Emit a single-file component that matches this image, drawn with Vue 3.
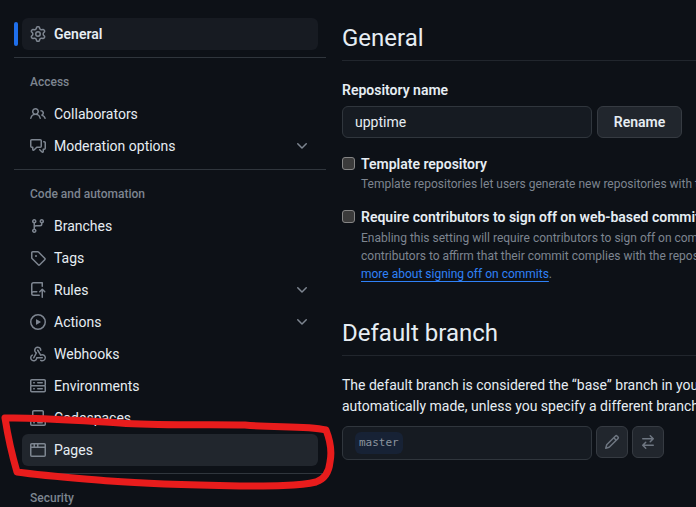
<template>
  <div class="page">
    <!-- Левая навигация -->
    <nav class="sidebar">
      <template v-for="row in menu" :key="row.label">
        <div v-if="row.type === 'line'" class="menu-line"></div>
        <div v-else-if="row.type === 'head'" class="menu-head">{{ row.label }}</div>
        <div v-else class="menu-row">
          <span class="marker" :class="{ on: row.current }"></span>
          <a class="menu-item" :class="{ current: row.current, hover: row.hover }">
            <svg class="icon" viewBox="0 0 16 16" width="16" height="16"><path :d="icons[row.icon]" /></svg>
            <span class="menu-label">{{ row.label }}</span>
            <svg v-if="row.more" class="icon chevron" viewBox="0 0 16 16" width="16" height="16"><path :d="icons.chevron" /></svg>
          </a>
        </div>
      </template>
    </nav>

    <!-- Основные настройки -->
    <main class="content">
      <h2 class="title first">General</h2>
      <label class="field-label">Repository name</label>
      <div class="name-row">
        <div class="text-box">upptime</div>
        <button class="btn rename">Rename</button>
      </div>

      <div class="check-row top">
        <input type="checkbox" class="check" />
        <div>
          <div class="check-title">Template repository</div>
          <p class="hint">Template repositories let users generate new repositories with the same directory structure</p>
        </div>
      </div>

      <div class="check-row second">
        <input type="checkbox" class="check" />
        <div>
          <div class="check-title long">Require contributors to sign off on web-based commits</div>
          <p class="hint">Enabling this setting will require contributors to sign off on commits made through</p>
          <p class="hint">contributors to affirm that their commit complies with the repository's terms</p>
          <p class="hint"><a class="link">more about signing off on commits</a>.</p>
        </div>
      </div>

      <h2 class="title branch">Default branch</h2>
      <p class="para">The default branch is considered the “base” branch in your repository, against which</p>
      <p class="para">automatically made, unless you specify a different branch.</p>
      <div class="branch-row">
        <div class="branch-box"><code class="chip">master</code></div>
        <button class="btn square">
          <svg class="icon" viewBox="0 0 16 16" width="16" height="16"><path :d="icons.pencil" /></svg>
        </button>
        <button class="btn square">
          <svg class="icon" viewBox="0 0 16 16" width="16" height="16"><path :d="icons.swap" /></svg>
        </button>
      </div>
    </main>

    <!-- Красная пометка поверх скриншота -->
    <svg class="scribble" viewBox="0 0 696 507" width="696" height="507">
      <path d="M5 418 C40 417 80 421 120 423 C160 426 205 424 245 425 C275 428 305 425 326 430 C330 440 332 452 330 462 C329 472 325 479 316 482 C300 486 270 486 240 486 C190 485 150 484 110 481 C75 478 45 476 17 472 C12 455 8 437 5 418 Z" />
    </svg>
  </div>
</template>

<script setup>
const icons = {
  gear: 'M8 0a8.2 8.2 0 0 1 .701.031C9.444.095 9.99.645 10.16 1.29l.288 1.107c.018.066.079.158.212.224.231.114.454.243.668.386.123.082.233.09.299.071l1.103-.303c.644-.176 1.392.021 1.82.63.27.385.506.792.704 1.218.315.675.111 1.422-.364 1.891l-.814.806c-.049.048-.098.147-.088.294.016.257.016.515 0 .772-.01.147.038.246.088.294l.814.806c.475.469.679 1.216.364 1.891a7.977 7.977 0 0 1-.704 1.217c-.428.61-1.176.807-1.82.63l-1.102-.302c-.067-.019-.177-.011-.3.071a5.909 5.909 0 0 1-.668.386c-.133.066-.194.158-.211.224l-.29 1.106c-.168.646-.715 1.196-1.458 1.26a8.006 8.006 0 0 1-1.402 0c-.743-.064-1.289-.614-1.458-1.26l-.289-1.106c-.018-.066-.079-.158-.212-.224a5.738 5.738 0 0 1-.668-.386c-.123-.082-.233-.09-.299-.071l-1.103.303c-.644.176-1.392-.021-1.82-.63a8.12 8.12 0 0 1-.704-1.218c-.315-.675-.111-1.422.363-1.891l.815-.806c.05-.048.098-.147.088-.294a6.214 6.214 0 0 1 0-.772c.01-.147-.038-.246-.088-.294l-.815-.806C.635 6.045.431 5.298.746 4.623a7.92 7.92 0 0 1 .704-1.217c.428-.61 1.176-.807 1.82-.63l1.102.302c.067.019.177.011.3-.071.214-.143.437-.272.668-.386.133-.066.194-.158.211-.224l.29-1.106C6.009.645 6.556.095 7.299.03 7.53.01 7.764 0 8 0Zm-.571 1.525c-.036.003-.108.036-.137.146l-.289 1.105c-.147.561-.549.967-.998 1.189-.173.086-.34.183-.5.29-.417.278-.97.423-1.529.27l-1.103-.303c-.109-.03-.175.016-.195.045-.22.312-.412.644-.573.99-.014.031-.021.11.059.19l.815.806c.411.406.562.957.53 1.456a4.709 4.709 0 0 0 0 .582c.032.499-.119 1.05-.53 1.456l-.815.806c-.081.08-.073.159-.059.19.162.346.353.677.573.989.02.03.085.076.195.046l1.102-.303c.56-.153 1.113-.008 1.53.27.161.107.328.204.501.29.447.222.85.629.997 1.189l.289 1.105c.029.109.101.143.137.146a6.6 6.6 0 0 0 1.142 0c.036-.003.108-.036.137-.146l.289-1.105c.147-.561.549-.967.998-1.189.173-.086.34-.183.5-.29.417-.278.97-.423 1.529-.27l1.103.303c.109.029.175-.016.195-.045.22-.313.411-.644.573-.99.014-.031.021-.11-.059-.19l-.815-.806c-.411-.406-.562-.957-.53-1.456a4.709 4.709 0 0 0 0-.582c-.032-.499.119-1.05.53-1.456l.815-.806c.081-.08.073-.159.059-.19a6.464 6.464 0 0 0-.573-.989c-.02-.03-.085-.076-.195-.046l-1.102.303c-.56.153-1.113.008-1.53-.27a4.44 4.44 0 0 0-.501-.29c-.447-.222-.85-.629-.997-1.189l-.289-1.105c-.029-.11-.101-.143-.137-.146a6.6 6.6 0 0 0-1.142 0ZM11 8a3 3 0 1 1-6 0 3 3 0 0 1 6 0ZM9.5 8a1.5 1.5 0 1 0-3.001.001A1.5 1.5 0 0 0 9.5 8Z',
  people: 'M2 5.5a3.5 3.5 0 1 1 5.898 2.549 5.508 5.508 0 0 1 3.034 4.084.75.75 0 1 1-1.482.235 4 4 0 0 0-7.9 0 .75.75 0 0 1-1.482-.236A5.507 5.507 0 0 1 3.102 8.05 3.493 3.493 0 0 1 2 5.5ZM11 4a3.001 3.001 0 0 1 2.22 5.018 5.01 5.01 0 0 1 2.56 3.012.749.749 0 0 1-.885.954.752.752 0 0 1-.549-.514 3.507 3.507 0 0 0-2.522-2.372.75.75 0 0 1-.574-.73v-.352a.75.75 0 0 1 .416-.672A1.5 1.5 0 0 0 11 5.5.75.75 0 0 1 11 4Zm-5.5-.5a2 2 0 1 0-.001 3.999A2 2 0 0 0 5.5 3.5Z',
  discussion: 'M1.75 1h8.5c.966 0 1.75.784 1.75 1.75v5.5A1.75 1.75 0 0 1 10.25 10H7.061l-2.574 2.573A1.458 1.458 0 0 1 2 11.543V10h-.25A1.75 1.75 0 0 1 0 8.25v-5.5C0 1.784.784 1 1.75 1ZM1.5 2.75v5.5c0 .138.112.25.25.25h1a.75.75 0 0 1 .75.75v2.19l2.72-2.72a.749.749 0 0 1 .53-.22h3.5a.25.25 0 0 0 .25-.25v-5.5a.25.25 0 0 0-.25-.25h-8.5a.25.25 0 0 0-.25.25Zm13 2a.25.25 0 0 0-.25-.25h-.5a.75.75 0 0 1 0-1.5h.5c.966 0 1.75.784 1.75 1.75v5.5A1.75 1.75 0 0 1 14.25 12H14v1.543a1.458 1.458 0 0 1-2.487 1.03L9.22 12.28a.749.749 0 0 1 .326-1.275.749.749 0 0 1 .734.215l2.22 2.22v-2.19a.75.75 0 0 1 .75-.75h1a.25.25 0 0 0 .25-.25Z',
  branch: 'M9.5 3.25a2.25 2.25 0 1 1 3 2.122V6A2.5 2.5 0 0 1 10 8.5H6a1 1 0 0 0-1 1v1.128a2.251 2.251 0 1 1-1.5 0V5.372a2.25 2.25 0 1 1 1.5 0v1.836A2.493 2.493 0 0 1 6 7h4a1 1 0 0 0 1-1v-.628A2.25 2.25 0 0 1 9.5 3.25Zm-6 0a.75.75 0 1 0 1.5 0 .75.75 0 0 0-1.5 0Zm8.25-.75a.75.75 0 1 0 0 1.5.75.75 0 0 0 0-1.5ZM4.25 12a.75.75 0 1 0 0 1.5.75.75 0 0 0 0-1.5Z',
  tag: 'M1 7.775V2.75C1 1.784 1.784 1 2.75 1h5.025c.464 0 .91.184 1.238.513l6.25 6.25a1.75 1.75 0 0 1 0 2.474l-5.026 5.026a1.75 1.75 0 0 1-2.474 0l-6.25-6.25A1.752 1.752 0 0 1 1 7.775Zm1.5 0c0 .066.026.13.073.177l6.25 6.25a.25.25 0 0 0 .354 0l5.025-5.025a.25.25 0 0 0 0-.354l-6.25-6.25a.25.25 0 0 0-.177-.073H2.75a.25.25 0 0 0-.25.25ZM6 5a1 1 0 1 1 0 2 1 1 0 0 1 0-2Z',
  rules: 'M1 2.5A2.5 2.5 0 0 1 3.5 0h8.75a.75.75 0 0 1 .75.75v3.5a.75.75 0 0 1-1.5 0V1.5h-8a1 1 0 0 0-1 1v6.708A2.493 2.493 0 0 1 3.5 9h3.25a.75.75 0 0 1 0 1.5H3.5a1 1 0 0 0 0 2h5.75a.75.75 0 0 1 0 1.5H3.5A2.5 2.5 0 0 1 1 11.5Zm13.23 7.79h-.001l-1.224-1.224v6.184a.75.75 0 0 1-1.5 0V9.066L10.28 10.29a.75.75 0 0 1-1.06-1.061l2.505-2.504a.75.75 0 0 1 1.06 0L15.29 9.23a.751.751 0 0 1-.018 1.042.751.751 0 0 1-1.042.018Z',
  play: 'M8 0a8 8 0 1 1 0 16A8 8 0 0 1 8 0ZM1.5 8a6.5 6.5 0 1 0 13 0 6.5 6.5 0 0 0-13 0Zm4.879-2.773 4.264 2.559a.25.25 0 0 1 0 .428l-4.264 2.559A.25.25 0 0 1 6 10.559V5.442a.25.25 0 0 1 .379-.215Z',
  webhook: 'M5.5 4.25a2.25 2.25 0 0 1 4.5 0 .75.75 0 0 0 1.5 0 3.75 3.75 0 1 0-6.14 2.889l-2.272 4.258a.75.75 0 0 0 1.324.706L7 7.25a.75.75 0 0 0-.309-1.015A2.25 2.25 0 0 1 5.5 4.25Z M7.364 3.607a.75.75 0 0 1 1.03.257l2.608 4.349a3.75 3.75 0 1 1-.628 6.785.75.75 0 0 1 .752-1.299 2.25 2.25 0 1 0-.033-3.88.75.75 0 0 1-1.03-.256L7.107 4.636a.75.75 0 0 1 .257-1.03Z M2.9 8.776A.75.75 0 0 1 2.625 9.8 2.25 2.25 0 1 0 6 11.75a.75.75 0 0 1 .75-.751h5.5a.75.75 0 0 1 0 1.5H7.425a3.751 3.751 0 1 1-5.55-3.998.75.75 0 0 1 1.024.274Z',
  server: 'M1.75 1h12.5c.966 0 1.75.784 1.75 1.75v4c0 .372-.116.717-.314 1 .198.283.314.628.314 1v4a1.75 1.75 0 0 1-1.75 1.75H1.75A1.75 1.75 0 0 1 0 12.75v-4c0-.372.116-.717.314-1A1.739 1.739 0 0 1 0 6.75v-4C0 1.784.784 1 1.75 1ZM1.5 2.75v4c0 .138.112.25.25.25h12.5a.25.25 0 0 0 .25-.25v-4a.25.25 0 0 0-.25-.25H1.75a.25.25 0 0 0-.25.25Zm.25 5.75a.25.25 0 0 0-.25.25v4c0 .138.112.25.25.25h12.5a.25.25 0 0 0 .25-.25v-4a.25.25 0 0 0-.25-.25ZM7 4.75A.75.75 0 0 1 7.75 4h4.5a.75.75 0 0 1 0 1.5h-4.5A.75.75 0 0 1 7 4.75ZM7.75 10h4.5a.75.75 0 0 1 0 1.5h-4.5a.75.75 0 0 1 0-1.5ZM3 4.75A.75.75 0 0 1 3.75 4h.5a.75.75 0 0 1 0 1.5h-.5A.75.75 0 0 1 3 4.75ZM3.75 10h.5a.75.75 0 0 1 0 1.5h-.5a.75.75 0 0 1 0-1.5Z',
  codespaces: 'M0 11.25c0-.966.784-1.75 1.75-1.75h12.5c.966 0 1.75.784 1.75 1.75v3A1.75 1.75 0 0 1 14.25 16H1.75A1.75 1.75 0 0 1 0 14.25Zm2-9.5C2 .784 2.784 0 3.75 0h8.5C13.216 0 14 .784 14 1.75v5a1.75 1.75 0 0 1-1.75 1.75h-8.5A1.75 1.75 0 0 1 2 6.75Zm1.75-.25a.25.25 0 0 0-.25.25v5c0 .138.112.25.25.25h8.5a.25.25 0 0 0 .25-.25v-5a.25.25 0 0 0-.25-.25Zm-2 9.5a.25.25 0 0 0-.25.25v3c0 .138.112.25.25.25h12.5a.25.25 0 0 0 .25-.25v-3a.25.25 0 0 0-.25-.25ZM7 12.75a.75.75 0 0 1 .75-.75h4.5a.75.75 0 0 1 0 1.5h-4.5a.75.75 0 0 1-.75-.75Zm-4 0a.75.75 0 0 1 .75-.75h.5a.75.75 0 0 1 0 1.5h-.5a.75.75 0 0 1-.75-.75Z',
  browser: 'M0 2.75C0 1.784.784 1 1.75 1h12.5c.966 0 1.75.784 1.75 1.75v10.5A1.75 1.75 0 0 1 14.25 15H1.75A1.75 1.75 0 0 1 0 13.25ZM14.5 6h-13v7.25c0 .138.112.25.25.25h12.5a.25.25 0 0 0 .25-.25Zm-6-3.5v2h6V2.75a.25.25 0 0 0-.25-.25ZM5 2.5v2h2v-2Zm-3.25 0a.25.25 0 0 0-.25.25V4.5h2v-2Z',
  chevron: 'M12.78 5.22a.749.749 0 0 1 0 1.06l-4.25 4.25a.749.749 0 0 1-1.06 0L3.22 6.28a.749.749 0 1 1 1.06-1.06L8 8.939l3.72-3.72a.749.749 0 0 1 1.06 0Z',
  pencil: 'M11.013 1.427a1.75 1.75 0 0 1 2.474 0l1.086 1.086a1.75 1.75 0 0 1 0 2.474l-8.61 8.61c-.21.21-.47.364-.756.445l-3.251.93a.75.75 0 0 1-.927-.928l.929-3.25c.081-.286.235-.547.445-.758l8.61-8.61Zm.176 4.823L9.75 4.81l-6.286 6.287a.253.253 0 0 0-.064.108l-.558 1.953 1.953-.558a.253.253 0 0 0 .108-.064Zm1.238-3.763a.25.25 0 0 0-.354 0L10.811 3.75l1.439 1.44 1.263-1.263a.25.25 0 0 0 0-.354Z',
  swap: 'M5.22 14.78a.75.75 0 0 0 1.06-1.06L4.56 12h8.69a.75.75 0 0 0 0-1.5H4.56l1.72-1.72a.75.75 0 0 0-1.06-1.06l-3 3a.75.75 0 0 0 0 1.06l3 3Zm5.56-6.5a.75.75 0 1 1-1.06-1.06l1.72-1.72H2.75a.75.75 0 0 1 0-1.5h8.69L9.72 2.28a.75.75 0 0 1 1.06-1.06l3 3a.75.75 0 0 1 0 1.06l-3 3Z'
}

const menu = [
  { label: 'General', icon: 'gear', current: true },
  { label: 'line-1', type: 'line' },
  { label: 'Access', type: 'head' },
  { label: 'Collaborators', icon: 'people' },
  { label: 'Moderation options', icon: 'discussion', more: true },
  { label: 'line-2', type: 'line' },
  { label: 'Code and automation', type: 'head' },
  { label: 'Branches', icon: 'branch' },
  { label: 'Tags', icon: 'tag' },
  { label: 'Rules', icon: 'rules', more: true },
  { label: 'Actions', icon: 'play', more: true },
  { label: 'Webhooks', icon: 'webhook' },
  { label: 'Environments', icon: 'server' },
  { label: 'Codespaces', icon: 'codespaces' },
  { label: 'Pages', icon: 'browser', hover: true },
  { label: 'line-3', type: 'line' },
  { label: 'Security', type: 'head' }
]
</script>

<style>
html, body {
  margin: 0;
  background: #0d1117;
  overflow: hidden;
}
</style>

<style scoped>
.page {
  position: relative;
  display: flex;
  width: 696px;
  height: 507px;
  overflow: hidden;
  background: #0d1117;
  color: #e6edf3;
  font-family: Roboto, "Liberation Sans", sans-serif;
  font-size: 14px;
  line-height: 21px;
  white-space: nowrap;
}

/* Навигация */
.sidebar {
  flex: none;
  width: 312px;
  margin-left: 14px;
  padding-top: 18px;
}

.menu-row {
  display: flex;
  align-items: center;
  height: 32px;
}

.marker {
  flex: none;
  width: 4px;
  height: 24px;
  margin-right: 4px;
  border-radius: 6px;
}

.marker.on {
  background: #1f6feb;
}

.menu-item {
  display: flex;
  align-items: center;
  gap: 8px;
  width: 296px;
  height: 32px;
  padding: 0 8px;
  box-sizing: border-box;
  border-radius: 6px;
}

.menu-item.current {
  background: #171b22;
  font-weight: 600;
}

.menu-item.hover {
  background: #21262d;
}

.menu-label {
  flex: 1;
}

.icon {
  flex: none;
  fill: #7d8590;
}

.menu-line {
  height: 1px;
  margin: 7px 0 0;
  background: #30363d;
}

.menu-head {
  height: 32px;
  padding-left: 16px;
  margin-top: 8px;
  font-size: 12px;
  line-height: 32px;
  font-weight: 500;
  color: #7d8590;
}

/* Контент */
.content {
  flex: none;
  width: 600px;
  margin-left: 16px;
}

.title {
  margin: 0;
  font-size: 24px;
  font-weight: 400;
  line-height: 36px;
  padding-bottom: 4px;
  border-bottom: 1px solid #21262d;
}

.title.first {
  margin-top: 20px;
}

.title.branch {
  margin-top: 32px;
}

.field-label {
  display: block;
  margin-top: 19px;
  font-weight: 600;
}

.name-row {
  display: flex;
  gap: 5px;
  margin-top: 5px;
}

.text-box {
  width: 250px;
  height: 32px;
  padding: 0 12px;
  box-sizing: border-box;
  line-height: 30px;
  background: #161b22;
  border: 1px solid #30363d;
  border-radius: 6px;
}

.btn {
  box-sizing: border-box;
  height: 32px;
  padding: 0;
  font: inherit;
  color: #e6edf3;
  background: #21262d;
  border: 1px solid #363b42;
  border-radius: 6px;
}

.rename {
  width: 85px;
  font-weight: 600;
}

.check-row {
  display: flex;
  gap: 6px;
}

.check-row.top {
  margin-top: 16px;
}

.check-row.second {
  margin-top: 14px;
}

.check {
  flex: none;
  appearance: none;
  box-sizing: border-box;
  width: 13px;
  height: 13px;
  margin: 3px 0 0;
  background: #3b3b3b;
  border: 1px solid #858585;
  border-radius: 3px;
}

.check-title {
  font-weight: 600;
}

.check-title.long {
  margin-bottom: 1px;
}

.hint {
  margin: 0;
  font-size: 12px;
  line-height: 18px;
  color: #7d8590;
}

.link {
  color: #2f81f7;
  text-decoration: underline;
  text-underline-offset: 3px;
}

.para {
  margin: 0;
  line-height: 21px;
}

.title.branch + .para {
  margin-top: 19px;
}

.branch-row {
  display: flex;
  align-items: flex-start;
  gap: 4px;
  margin-top: 9px;
}

.branch-box {
  display: flex;
  align-items: flex-start;
  width: 250px;
  height: 34px;
  padding: 5px 12px;
  box-sizing: border-box;
  background: #161b22;
  border: 1px solid #30363d;
  border-radius: 6px;
}

.chip {
  padding: 0 4px;
  height: 22px;
  font-family: "DejaVu Sans Mono", "Liberation Mono", monospace;
  font-size: 11px;
  line-height: 21px;
  color: #8b949e;
  background: #172235;
  border-radius: 6px;
}

.square {
  display: flex;
  align-items: center;
  justify-content: center;
  width: 32px;
}

.square .icon {
  fill: #6e7681;
}

/* Пометка от руки */
.scribble {
  position: absolute;
  left: 0;
  top: 0;
  pointer-events: none;
}

.scribble path {
  fill: none;
  stroke: #e81c1c;
  stroke-width: 7;
  stroke-linejoin: round;
}
</style>
